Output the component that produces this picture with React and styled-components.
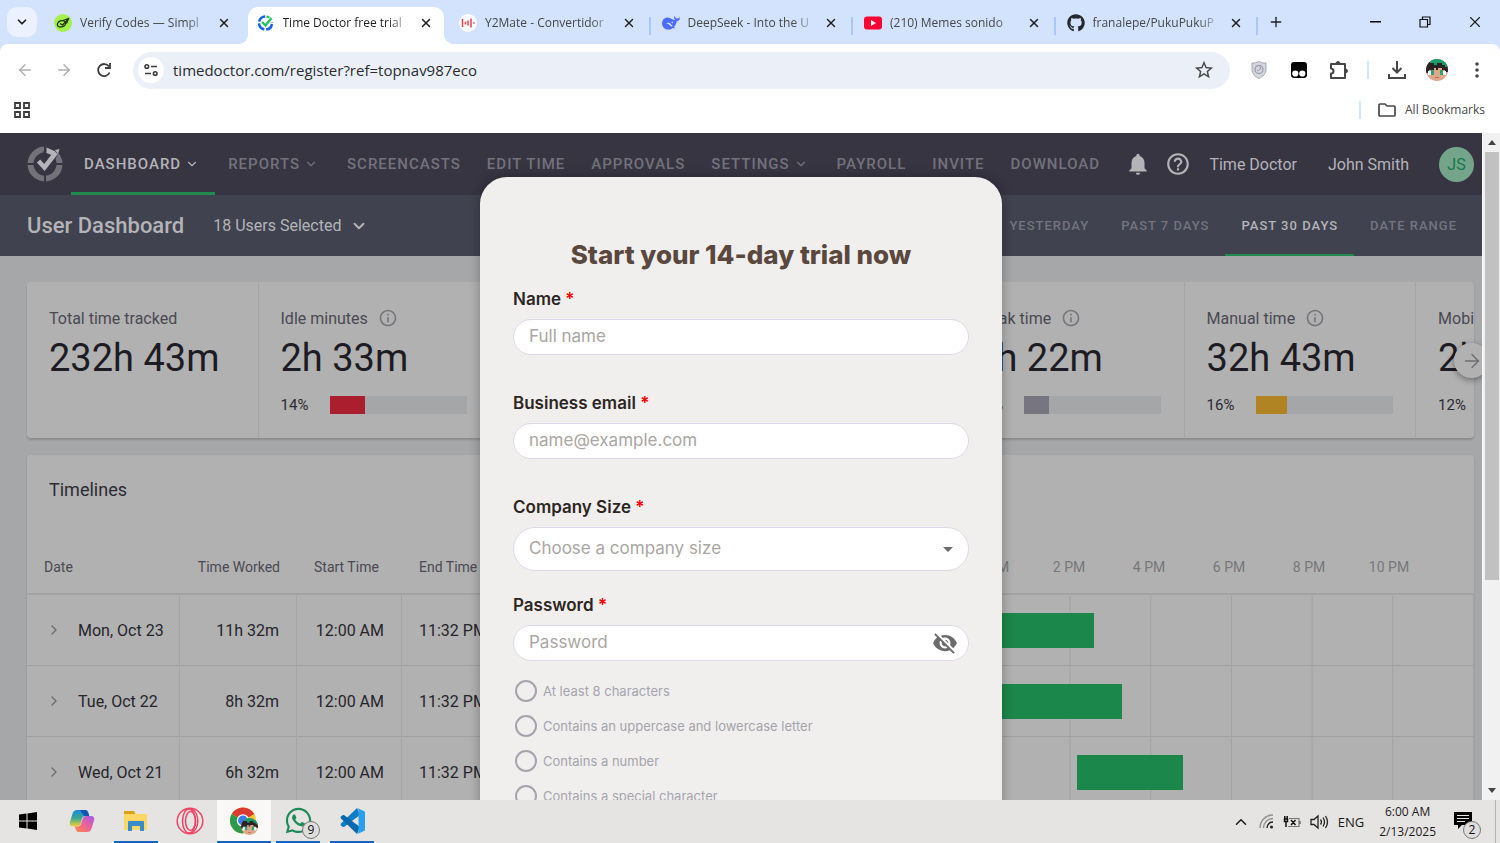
import React from 'react';
import styled, {createGlobalStyle, css} from 'styled-components';
import {FaGithub, FaWhatsapp} from 'react-icons/fa';
import {MdNotifications, MdHelpOutline, MdInfoOutline, MdVisibilityOff, MdArrowDropDown, MdStarOutline} from 'react-icons/md';
import {ArrowLeft, ArrowRight, ChevronDown, ChevronRight, ChevronUp, Plus, X} from 'lucide-react';

const GlobalStyle = createGlobalStyle`
    *,
    *::before,
    *::after {
        box-sizing: border-box;
    }

    body {
        margin: 0;
        font-family: 'Open Sans', 'Noto Sans', sans-serif;
    }

    button, input, select {
        font: inherit;
        color: inherit;
        margin: 0;
        padding: 0;
        border: 0;
        background: none;
        outline: none;
    }

    a {
        color: inherit;
        text-decoration: none;
    }

    svg {
        display: block;
        flex: none;
    }
`;

const Screen = styled.div`
    display: flex;
    flex-direction: column;
    height: 100vh;
    overflow: hidden;
    background: #fff;
`;

/* ---------- browser ---------- */

const TabStrip = styled.div`
    display: flex;
    align-items: center;
    flex: none;
    height: 44px;
    background: #d3e3fd;
`;

const TabSearch = styled.button`
    display: flex;
    align-items: center;
    justify-content: center;
    width: 30px;
    height: 30px;
    margin: 0 8px 0 7px;
    border-radius: 10px;
    background: #ebf1fe;
    color: #1f1f1f;
`;

const TabItem = styled.div`
    display: flex;
    align-items: center;
    flex: 0 1 13.5%;
    min-width: 0;
    height: 100%;
    padding-top: 7px;
`;

const TabBody = styled.div`
    position: relative;
    display: flex;
    align-items: center;
    flex: 1;
    min-width: 0;
    height: 100%;
    gap: 8px;
    padding: 0 12px 5px 9px;
    color: #474747;
    ${({$active}) => $active && css`
        background: #fff;
        border-radius: 10px 10px 0 0;
        color: #1f1f1f;

        &::before,
        &::after {
            content: '';
            position: absolute;
            bottom: 0;
            width: 10px;
            height: 10px;
        }

        &::before {
            right: 100%;
            background: radial-gradient(circle at 0 0, transparent 10px, #fff 10px);
        }

        &::after {
            left: 100%;
            background: radial-gradient(circle at 100% 0, transparent 10px, #fff 10px);
        }
    `}
`;

const TabTitle = styled.span`
    flex: 1;
    min-width: 0;
    overflow: hidden;
    white-space: nowrap;
    font-size: 12px;
    line-height: 20px;
    mask-image: linear-gradient(to right, #000 calc(100% - 24px), transparent);
`;

const IconButton = styled.button`
    display: flex;
    align-items: center;
    justify-content: center;
    flex: none;
    width: ${({$w}) => $w || 20}px;
    height: 20px;
    color: ${({$color}) => $color || '#1f1f1f'};
`;

const TabClose = styled(IconButton)`
    width: 12px;
`;

const TabLine = styled.span`
    width: 2px;
    height: 18px;
    margin: 0 2px;
    background: ${({$show}) => ($show ? '#a8c7fa' : 'transparent')};
`;

const WindowButtons = styled.div`
    display: flex;
    margin-left: auto;
`;

const ToolbarBack = styled.div`
    flex: none;
    background: #d3e3fd;
`;

const Toolbar = styled.div`
    display: flex;
    align-items: center;
    height: 52px;
    padding: 0 4px 0 5px;
    border-radius: 8px 8px 0 0;
    background: #fff;
`;

const AddressBar = styled.label`
    display: flex;
    align-items: center;
    flex: 1;
    min-width: 0;
    height: 37px;
    margin: 0 9px;
    padding: 0 15px 0 5px;
    border-radius: 19px;
    background: #ebf0f8;
`;

const SiteChip = styled.span`
    display: flex;
    align-items: center;
    justify-content: center;
    width: 26px;
    height: 26px;
    margin-right: 9px;
    border-radius: 50%;
    background: #fff;
`;

const AddressInput = styled.input`
    flex: 1;
    min-width: 0;
    color: #2a2c2f;
    font-size: 15px;
    line-height: 20px;
`;

const ToolLine = styled.span`
    width: 2px;
    height: 18px;
    margin: 0 ${({$gap}) => $gap}px;
    background: #d3e3fd;
`;

const BookmarkBar = styled.div`
    display: flex;
    align-items: center;
    justify-content: space-between;
    flex: none;
    height: 37px;
    padding: 0 15px 9px 14px;
    color: #474747;
    font-size: 12px;
    line-height: 20px;
`;

const BookmarkGroup = styled.button`
    display: flex;
    align-items: center;
    gap: 9px;
`;

/* ---------- page ---------- */

const Viewport = styled.main`
    display: flex;
    flex: 1;
    min-height: 0;
`;

const Page = styled.div`
    position: relative;
    flex: 1;
    min-width: 0;
    overflow: hidden;
    background: #a5a7a9;
    font-family: Roboto, sans-serif;
`;

const Scrollbar = styled.div`
    display: flex;
    flex-direction: column;
    align-items: center;
    flex: none;
    width: 18px;
    background: #f1f1f1;
    border-left: 1px solid #fafafa;
`;

const ScrollArrow = styled.span`
    display: flex;
    align-items: center;
    justify-content: center;
    height: 19px;
`;

const ScrollTrack = styled.div`
    flex: 1;
    width: 14px;
`;

const ScrollThumb = styled.div`
    height: 68%;
    background: #c1c1c1;
`;

const NavBar = styled.header`
    display: flex;
    align-items: center;
    height: 62px;
    padding: 0 8px 0 27px;
    background: #373542;
    color: #b4b3b8;
    font-size: 16px;
`;

const NavLinks = styled.nav`
    display: flex;
    height: 100%;
    margin-left: 8px;
`;

const NavLink = styled.a`
    display: flex;
    align-items: center;
    gap: 4px;
    padding: 3px 13px 0;
    border-bottom: 3px solid ${({$active}) => ($active ? '#218a4e' : 'transparent')};
    color: ${({$active}) => ($active ? '#b4b3b8' : '#73727c')};
    font-size: 15px;
    font-weight: 500;
    letter-spacing: 1px;
    white-space: nowrap;

    svg {
        margin-right: 3px;
    }
`;

const NavUser = styled.div`
    display: flex;
    align-items: center;
    margin-left: auto;
    white-space: nowrap;
`;

const NavText = styled.a`
    margin-left: ${({$gap}) => $gap}px;
`;

const Avatar = styled.span`
    display: flex;
    align-items: center;
    justify-content: center;
    width: 35px;
    height: 35px;
    margin-left: 30px;
    border-radius: 50%;
    background: #74a58a;
    color: #16774a;
`;

const SubBar = styled.div`
    display: flex;
    align-items: center;
    height: 61px;
    padding: 0 9px 0 27px;
    background: #40424f;
    color: #b4b4b8;
`;

const PageTitle = styled.h1`
    margin: 0 29px 0 0;
    font-size: 22px;
    font-weight: 500;
`;

const UserPicker = styled.button`
    display: flex;
    align-items: center;
    gap: 9px;
    font-size: 16px;
`;

const RangeTabs = styled.div`
    display: flex;
    height: 100%;
    margin-left: auto;
`;

const RangeTab = styled.button`
    padding: 2px 16px 0;
    border-bottom: 2px solid ${({$active}) => ($active ? '#218a4e' : 'transparent')};
    color: ${({$active}) => ($active ? '#b4b4b8' : '#737480')};
    font-size: 13px;
    font-weight: 500;
    letter-spacing: 1px;
    white-space: nowrap;
`;

const Content = styled.div`
    display: flex;
    flex-direction: column;
    gap: 17px;
    padding: 26px 8px 0 27px;
`;

const StatsWrap = styled.section`
    position: relative;
`;

const Stats = styled.div`
    display: flex;
    height: 156px;
    overflow: hidden;
    border-radius: 4px;
    background: #b1b1b1;
    box-shadow: 0 2px 2px #8c8c8d;
`;

const Stat = styled.div`
    flex: 0 0 16%;
    padding: 25px 22px 0;
    border-right: 1px solid #a5a5a6;
    white-space: nowrap;
`;

const StatLabel = styled.div`
    display: flex;
    align-items: center;
    gap: 10px;
    height: 22px;
    color: #4a4953;
    font-size: 16px;
`;

const StatValue = styled.div`
    color: #1d1c24;
    font-size: 38px;
    line-height: 58px;
`;

const StatShare = styled.div`
    display: flex;
    align-items: center;
    height: 36px;
    color: #2c2b33;
    font-size: 15px;
`;

const StatPercent = styled.span`
    width: 49px;
`;

const StatTrack = styled.div`
    flex: none;
    width: 137px;
    height: 18px;
    background: #a4a6a8;
`;

const StatFill = styled.div`
    height: 100%;
    background: ${({$color}) => $color};
`;

const NextButton = styled.button`
    position: absolute;
    top: 61px;
    right: -15px;
    display: flex;
    align-items: center;
    justify-content: center;
    width: 35px;
    height: 35px;
    border-radius: 50%;
    background: #b1b1b1;
    box-shadow: 0 2px 6px rgba(0, 0, 0, 0.4);
    color: #6d6d70;
`;

const Timelines = styled.section`
    border-radius: 4px;
    background: #b1b1b1;
    box-shadow: 0 1px 2px #8c8c8d;
`;

const SectionTitle = styled.h2`
    margin: 0;
    padding: 22px 22px 0;
    color: #2c2b33;
    font-size: 18px;
    font-weight: 400;
    line-height: 26px;
`;

const TimeTable = styled.table`
    width: 100%;
    margin-top: 37px;
    border-spacing: 0;
    table-layout: fixed;
    color: #26252c;
    font-size: 16px;
    white-space: nowrap;
`;

const Th = styled.th`
    width: ${({$w}) => ($w ? `${$w}px` : 'auto')};
    height: 55px;
    padding: 0 17px;
    border-bottom: 2px solid #a3a3a4;
    color: #4a4953;
    font-size: 14px;
    font-weight: 400;
    text-align: ${({$align}) => $align || 'left'};
`;

const ThChart = styled(Th)`
    padding: 0;
    color: #77777b;
`;

const Td = styled.td`
    height: 71px;
    padding: 0 17px;
    border-right: 1px solid #a5a5a6;
    border-bottom: 1px solid #a0a0a2;
    text-align: ${({$align}) => $align || 'left'};
`;

const TdChart = styled(Td)`
    padding: 0;
    border-right: 0;
`;

const DateCell = styled.div`
    display: flex;
    align-items: center;
    gap: 16px;
    padding-left: 2px;
`;

const Hours = styled.div`
    display: grid;
    grid-template-columns: repeat(11, 1fr);
    padding: 0 45px 0 43px;
    text-align: center;
`;

const DayTrack = styled.div`
    display: flex;
    align-items: center;
    height: 70px;
    background: linear-gradient(to right, transparent calc(100% - 1px), #a3a3a5 calc(100% - 1px)) 0 0 / calc(100% / 12) 100%;
`;

const DayBar = styled.div`
    height: 35px;
    background: #1c874a;
`;

/* ---------- sign-up form ---------- */

const SignUp = styled.form`
    position: absolute;
    top: 44px;
    left: 50%;
    width: 522px;
    height: 760px;
    padding: 62px 33px 0;
    transform: translateX(-50%);
    border-radius: 27px;
    background: #f0efee;
    box-shadow: 0 0 12px rgba(0, 0, 0, 0.3);
    font-family: Inter, sans-serif;
`;

const SignUpTitle = styled.h2`
    margin: 0 0 13px;
    color: #5a473d;
    font-size: 26px;
    font-weight: 800;
    line-height: 32px;
    text-align: center;
`;

const FieldLabel = styled.label`
    display: block;
    margin-bottom: 5px;
    color: #2d2522;
    font-size: 17px;
    font-weight: 600;
    line-height: 30px;
`;

const Required = styled.span`
    color: #f00;
`;

const FieldBox = styled.div`
    display: flex;
    align-items: center;
    height: ${({$tall}) => ($tall ? 44 : 36)}px;
    margin-bottom: ${({$gap}) => $gap || 0}px;
    padding: 0 ${({$tall}) => ($tall ? 8 : 10)}px 0 15px;
    border: 1px solid #dcdae8;
    border-radius: 22px;
    background: #fff;
    color: #aaa6a3;
    font-size: 17px;

    input,
    select {
        flex: 1;
        min-width: 0;
        height: 100%;
        padding-bottom: 3px;
    }

    input::placeholder {
        color: #aaa6a3;
        opacity: 1;
    }

    select {
        appearance: none;
    }
`;

const Rules = styled.ul`
    display: flex;
    flex-direction: column;
    gap: 13px;
    margin: 19px 0 0;
    padding: 0 2px;
    list-style: none;
`;

const Rule = styled.li`
    display: flex;
    align-items: center;
    gap: 6px;
    height: 22px;
    color: #a5a4ad;
    font-size: 13px;
    line-height: 18px;

    &::before {
        content: '';
        width: 22px;
        height: 22px;
        border: 2px solid #a5a4ad;
        border-radius: 50%;
    }
`;

/* ---------- taskbar ---------- */

const Taskbar = styled.footer`
    display: flex;
    flex: none;
    height: 43px;
    padding-left: 1px;
    background: #e6e4e2;
    color: #1a1a1a;
`;

const AppButton = styled.button`
    position: relative;
    display: flex;
    align-items: center;
    justify-content: center;
    width: 54px;
    border-bottom: 2px solid transparent;
    ${({$open}) => $open && css`
        width: 44px;
        margin: 0 5px;
        border-bottom-color: #1565c0;
    `}
    ${({$active}) => $active && css`
        width: 54px;
        margin: 0;
        background: #f9f8f7;
    `}
`;

const TrayButton = styled(AppButton)`
    align-self: stretch;
    width: 36px;
`;

const Count = styled.span`
    position: absolute;
    right: 0;
    bottom: 2px;
    width: 18px;
    height: 18px;
    border: 1px solid #777;
    border-radius: 50%;
    background: #dedede;
    color: #111;
    font-size: 12px;
    line-height: 16px;
    text-align: center;
`;

const Tray = styled.div`
    display: flex;
    align-items: center;
    gap: 9px;
    margin-left: auto;
    font-size: 13px;
`;

const Clock = styled.time`
    margin-left: 6px;
    font-size: 12px;
    line-height: 20px;
    text-align: center;
`;

const DesktopEdge = styled.span`
    align-self: stretch;
    width: 5px;
    margin-left: 5px;
    border-left: 1px solid #b5b3b1;
`;

/* ---------- drawings ---------- */

const VerifyIcon = () => (
    <svg width="18" height="18" viewBox="0 0 18 18">
        <circle cx="9" cy="9" r="9" fill="#a4f04c" />
        <g fill="none" stroke="#1d3310" strokeWidth="1.3">
            <ellipse cx="7.500" cy="9.800" rx="4.300" ry="3" transform="rotate(-20 7.500 9.800)" />
            <path d="M6 9.500l2.500 1.500L14 5.500M9 6.500l5.500-2-2 5" />
        </g>
    </svg>
);

const TimeDoctorIcon = () => (
    <svg width="18" height="18" viewBox="0 0 18 18" fill="none">
        <circle cx="8.500" cy="9" r="6.500" stroke="#1763e6" strokeWidth="2.600" strokeDasharray="8.200 2" strokeDashoffset="-1" />
        <path d="M10 1.500h7v7h-7z" fill="#fff" />
        <path d="M5 8l3.500 3.500L14.500 4" stroke="#25c45c" strokeWidth="2.400" />
        <path d="M9.500 2.500l3 1" stroke="#25c45c" strokeWidth="2" />
    </svg>
);

const Y2MateIcon = () => (
    <svg width="18" height="18" viewBox="0 0 18 18">
        <circle cx="9" cy="9" r="9" fill="#fff" />
        <path d="M3.500 5v8M6.500 7.500v3M9 6.500v5M12 4.500v9M15 8.200v1.600" stroke="#e0444e" strokeWidth="1.500" />
    </svg>
);

const DeepSeekIcon = () => (
    <svg width="18" height="18" viewBox="0 0 24 24">
        <path
            fill="#4d6bfe"
            d="M23.700 4.500c-.3-.1-.4.1-.5.2-.8 1-1.700 1.400-2.900 1.400-1.300-.1-2.400-.9-3-2.100-.5-1-.7-1.700-1-.7-.5 1.500-.1 3.100 1.300 4.400-1.400.4-2.600-.1-3.600-.6C11.500 5.800 9 4.400 6.300 4.700 2.200 5.300-.3 9 .1 13.200c.5 4.300 4 7.400 8.200 7.400 2.300.1 4.300-.7 5.900-2.100 1 .6 2.400.9 3.200.5-.3-.9-1-1.200-1.500-1.800 2.500-2.700 3.500-5.200 3.800-7.600 2.300-.3 4.200-2 4.200-4.700 0-.2 0-.3-.2-.4zM12.600 16.700c-2.700-2.100-4-4-7-4.400 2.500-1.300 5.200-.5 6.800 1.600.6.700 1 1.500 1.700 2-.4.5-.9.8-1.500.8zm1.700-4.500c-.8.300-1.600-.3-1.600-1.100 0-.6.400-1 .9-1 .9 0 1.500 1.300.7 2.100z"
        />
    </svg>
);

const YoutubeIcon = () => (
    <svg width="18" height="18" viewBox="0 0 18 18">
        <rect y="2.500" width="18" height="13" rx="3" fill="#ff0033" />
        <path d="M7 6v6l5-3z" fill="#fff" />
    </svg>
);

const ReloadIcon = () => (
    <svg width="16" height="16" viewBox="0 0 16 16" fill="none" stroke="#3c3c3c" strokeWidth="1.800">
        <path d="M13.600 10.500A6 6 0 1 1 13 4.500M14 1v5H9" />
    </svg>
);

const TuneIcon = () => (
    <svg width="14" height="14" viewBox="0 0 14 14" fill="none" stroke="#3c3c3c" strokeWidth="1.600">
        <circle cx="2.800" cy="3.500" r="1.800" />
        <circle cx="11.200" cy="10.500" r="1.800" />
        <path d="M7 3.500h6M1 10.500h6" />
    </svg>
);

const ShieldIcon = () => (
    <svg width="16" height="18" viewBox="0 0 16 18">
        <path d="M8 .5c2 1.200 4.500 1.700 7 1.500v6.500c0 4.200-3 7-7 9-4-2-7-4.800-7-9V2C3.500 2.200 6 1.700 8 .5z" fill="#d5d7dd" stroke="#a5a8b3" />
        <circle cx="8" cy="8.500" r="4" fill="none" stroke="#9b9fab" strokeWidth="1.300" />
        <path d="M6 9c2 1 3.500 0 3.500-3" fill="none" stroke="#8c909d" />
    </svg>
);

const MonkeyIcon = () => (
    <svg width="16" height="16" viewBox="0 0 16 16">
        <rect width="16" height="16" rx="3" />
        <circle cx="4.300" cy="11.500" r="3.100" fill="#fff" />
        <circle cx="11.300" cy="11.500" r="3.100" fill="#fff" />
    </svg>
);

const PuzzleIcon = () => (
    <svg width="20" height="20" viewBox="0 0 20 20" fill="none" stroke="#474747" strokeWidth="2">
        <path d="M2 4h14v14H2v-4.500a2.500 2.500 0 0 0 0-5z" strokeLinejoin="round" />
        <path d="M7 3.500a2 2 0 0 1 4 0zM16.500 9a2 2 0 0 1 0 4z" fill="#474747" strokeWidth="1" />
    </svg>
);

const DownloadIcon = () => (
    <svg width="18" height="18" viewBox="0 0 18 18" fill="none" stroke="#474747" strokeWidth="2">
        <path d="M9 0v11M4.500 7L9 11.500 13.500 7M1 13v4h16v-4" />
    </svg>
);

const FaceIcon = ({size = 22}) => (
    <svg width={size} height={size} viewBox="0 0 22 22">
        <clipPath id={`face${size}`}><circle cx="11" cy="11" r="11" /></clipPath>
        <g clipPath={`url(#face${size})`}>
            <path fill="#e0a888" d="M0 0h22v22H0z" />
            <path fill="#2b2226" d="M0 3h22v10h-3v-2h-3V9h-4v2h-2V9H8v3H5v-1H3v3H0z" />
            <path fill="#1b9d69" d="M4 0h18v8h-3V6h-3V4h-5v2H8V4H4z" />
            <path fill="#fff" d="M2 12h4v4H2zM16 12h4v4h-4z" />
            <path fill="#29a577" d="M5 11h3v5H5zM14 11h3v5h-3z" />
            <path fill="#b86e58" d="M9 18h4v1H9z" />
        </g>
    </svg>
);

const DotsIcon = () => (
    <svg width="4" height="16" viewBox="0 0 4 16" fill="#474747">
        <circle cx="2" cy="2" r="1.800" />
        <circle cx="2" cy="8" r="1.800" />
        <circle cx="2" cy="14" r="1.800" />
    </svg>
);

const AppsIcon = () => (
    <svg width="16" height="16" viewBox="0 0 16 16" fill="none" stroke="#3c3c3c" strokeWidth="1.800">
        <path d="M1 1h5v5H1zM10 1h5v5h-5zM1 10h5v5H1zM10 10h5v5h-5z" />
    </svg>
);

const FolderIcon = () => (
    <svg width="18" height="14" viewBox="0 0 18 14" fill="none" stroke="#474747" strokeWidth="1.700">
        <path d="M1 2.200Q1 1 2.200 1H7l2 2h7q1 0 1 1v8q0 1-1 1H2q-1 0-1-1z" />
    </svg>
);

const RestoreIcon = () => (
    <svg width="12" height="12" viewBox="0 0 12 12" fill="none" stroke="#111" strokeWidth="1.200">
        <path d="M1 3.500h7.500V11H1zM3.500 3.500V1H11v7.500H8.500" />
    </svg>
);

const LogoIcon = () => (
    <svg width="36" height="36" viewBox="0 0 36 36" fill="none">
        <circle cx="18" cy="18" r="14.500" stroke="#73727b" strokeWidth="6" />
        <path d="M18 0v36M0 18h36" stroke="#373542" strokeWidth="2" />
        <path d="M20 0l13 4-6 12-9 8-7-10z" fill="#373542" />
        <path d="M11.500 15l6 6.500L29 6.500" stroke="#b4b3b8" strokeWidth="4.600" />
        <path d="M19.500 1.500v5.500l5 2 4-3.500z" fill="#b4b3b8" />
        <path d="M28 4l4.500-1-1.500 5z" fill="#b4b3b8" />
    </svg>
);

const WindowsIcon = () => (
    <svg width="18" height="18" viewBox="0 0 18 18">
        <path d="M0 2.500l7.500-1v7H0zM8.500 1.400L18 0v8.500H8.500zM0 9.500h7.500v7l-7.500-1zM8.500 9.500H18V18l-9.500-1.400z" />
    </svg>
);

const CopilotIcon = () => (
    <svg width="26" height="24" viewBox="0 0 26 24">
        <defs>
            <linearGradient id="copA" x1="0" y1="0" x2="0" y2="1">
                <stop offset="0" stopColor="#188ad7" />
                <stop offset="0.500" stopColor="#3ba894" />
                <stop offset="1" stopColor="#f4d330" />
            </linearGradient>
            <linearGradient id="copB" x1="1" y1="0" x2="0" y2="1">
                <stop offset="0" stopColor="#a158ee" />
                <stop offset="0.500" stopColor="#ed6199" />
                <stop offset="1" stopColor="#fb8c46" />
            </linearGradient>
        </defs>
        <path d="M8 1h8.500q2 0 2.700 2.500l1 3.500h-4q-2.500 0-3.200 2.500l-1.500 5.500q-.8 2.500-3 2.500H4Q0 17.500 1 13L3.500 4.500Q4.500 1 8 1z" fill="url(#copA)" />
        <path d="M11 1h5.500q2 0 2.700 2.500l1 3.500h-5z" fill="#1455b8" />
        <path d="M18 23H9.500q-2 0-2.700-2.500l-1-3h3q2.500 0 3.200-2.500l1.700-5.500q.8-2.500 3-2.500H22q4 0 3 4.500L22.500 19.500Q21.500 23 18 23z" fill="url(#copB)" />
    </svg>
);

const ExplorerIcon = () => (
    <svg width="24" height="20" viewBox="0 0 24 20">
        <path d="M0 0h10l1.500 3H0z" fill="#dca018" />
        <path d="M0 3h23v16H0z" fill="#fcd766" />
        <path d="M4 11q0-1 1-1h14q1 0 1 1v9h-4v-5H8v5H4z" fill="#398ccb" />
    </svg>
);

const OperaIcon = () => (
    <svg width="28" height="28" viewBox="0 0 28 28" fill="none" stroke="#ee4468" strokeWidth="1.500">
        <circle cx="14" cy="14" r="12.800" />
        <ellipse cx="13" cy="14" rx="6.500" ry="12" />
        <ellipse cx="14.500" cy="14" rx="5" ry="9.500" />
        <path d="M15 2c9 3 9 21 0 24" />
    </svg>
);

const ChromeIcon = () => (
    <svg width="28" height="28" viewBox="0 0 28 28">
        <circle cx="13" cy="13.500" r="13" fill="#fcc934" />
        <path d="M13 13.500L1.700 7A13 13 0 0 1 24.300 7z" fill="#d93b30" />
        <path d="M13 13.500L1.700 7A13 13 0 0 0 13 26.500l4-6z" fill="#2c9a4b" />
        <circle cx="13" cy="13.500" r="6.200" fill="#fff" />
        <circle cx="13" cy="13.500" r="4.900" fill="#3b7ded" />
        <svg x="11" y="11" width="17" height="17"><FaceIcon size={17} /></svg>
    </svg>
);

const CodeIcon = () => (
    <svg width="26" height="26" viewBox="0 0 26 26">
        <path d="M18 0l-16 15.500q-1 1 0 2l1.500 1.300q.8.600 1.800 0L21 7z" fill="#0f7cc4" />
        <path d="M18 26L2 10.500q-1-1 0-2l1.500-1.300q.8-.6 1.800 0L21 19z" fill="#0b68ad" />
        <path d="M18 0l7 3q1 .500 1 1.500v17q0 1-1 1.500l-7 3q1.500-1 1.500-3V3q0-2-1.500-3z" fill="#28a0ee" />
    </svg>
);

const WifiIcon = () => (
    <svg width="15" height="15" viewBox="0 0 15 15" fill="none" strokeWidth="1.400">
        <path d="M1 14A13 13 0 0 1 14 1M4.500 14A9.500 9.500 0 0 1 14 4.500" stroke="#929090" />
        <path d="M8 14a6 6 0 0 1 6-6" stroke="#222" />
        <circle cx="12.500" cy="13" r="1.500" fill="#222" />
    </svg>
);

const BatteryIcon = () => (
    <svg width="18" height="12" viewBox="0 0 18 12" fill="none" stroke="#111" strokeWidth="1.500">
        <path d="M6 2.500h10v8H5M17.200 5v3" stroke="#777" strokeWidth="1.200" />
        <path d="M1.500 3h3v2.500h-3zM1.800 0v2.500M4.200 0v2.500M3 5v6M8 4l4.500 5M12.500 4L8 9" />
    </svg>
);

const SoundIcon = () => (
    <svg width="19" height="16" viewBox="0 0 19 16" fill="none" stroke="#222" strokeWidth="1.300">
        <path d="M1 5.500h3L8 2v12l-4-3.500H1zM10.500 5.500q1.800 2.500 0 5M13 3.500q3 4.500 0 9M15.500 2q4 6 0 12" />
    </svg>
);

const NoticeIcon = () => (
    <svg width="18" height="17" viewBox="0 0 18 17">
        <path d="M0 0h18v13H8l-4 4v-4H0z" />
        <path d="M3 3.500h12M3 6.500h12M3 9.500h8" stroke="#e6e4e2" />
    </svg>
);

const Triangle = ({down}) => (
    <svg width="8" height="5" viewBox="0 0 8 5" fill="#444">
        <path d={down ? 'M0 0h8L4 5z' : 'M0 5h8L4 0z'} />
    </svg>
);

const tabs = [
    {title: 'Verify Codes — Simpl', icon: <VerifyIcon />},
    {title: 'Time Doctor free trial', icon: <TimeDoctorIcon />, active: true},
    {title: 'Y2Mate - Convertidor', icon: <Y2MateIcon />, line: true},
    {title: 'DeepSeek - Into the U', icon: <DeepSeekIcon />, line: true},
    {title: '(210) Memes sonido', icon: <YoutubeIcon />, line: true},
    {title: 'franalepe/PukuPukuP', icon: <FaGithub size={18} color="#24292f" />, line: true},
];

const navLinks = [
    {text: 'DASHBOARD', menu: true, active: true},
    {text: 'REPORTS', menu: true},
    {text: 'SCREENCASTS'},
    {text: 'EDIT TIME'},
    {text: 'APPROVALS'},
    {text: 'SETTINGS', menu: true},
    {text: 'PAYROLL'},
    {text: 'INVITE'},
    {text: 'DOWNLOAD'},
];

const ranges = ['YESTERDAY', 'PAST 7 DAYS', 'PAST 30 DAYS', 'DATE RANGE'];

const stats = [
    {label: 'Total time tracked', value: '232h 43m'},
    {label: 'Idle minutes', value: '2h 33m', share: '14%', fill: 26, color: '#ab1e2d', info: true},
    {},
    {},
    {label: 'Break time', value: '1h 22m', share: '17%', fill: 18, color: '#767580', info: true},
    {label: 'Manual time', value: '32h 43m', share: '16%', fill: 23, color: '#b08323', info: true},
    {label: 'Mobile time', value: '2h 12m', share: '12%', fill: 20, color: '#767580', info: true},
];

const hours = ['2 AM', '4 AM', '6 AM', '8 AM', '10 AM', '12 PM', '2 PM', '4 PM', '6 PM', '8 PM', '10 PM'];

const days = [
    {date: 'Mon, Oct 23', worked: '11h 32m', from: 40, to: 60.7},
    {date: 'Tue, Oct 22', worked: '8h 32m', from: 40, to: 63.6},
    {date: 'Wed, Oct 21', worked: '6h 32m', from: 59, to: 69.9},
    {date: 'Thu, Oct 20', worked: '6h 32m', from: 40, to: 50},
];

const rules = [
    'At least 8 characters',
    'Contains an uppercase and lowercase letter',
    'Contains a number',
    'Contains a special character',
];

const Browser = () => (
    <>
        <TabStrip>
            <TabSearch aria-label="Search tabs"><ChevronDown size={14} strokeWidth={3} /></TabSearch>
            {tabs.map(({title, icon, active, line}) => (
                <TabItem key={title}>
                    <TabBody $active={active}>
                        {icon}
                        <TabTitle>{title}</TabTitle>
                        <TabClose aria-label="Close tab"><X size={14} strokeWidth={2.5} /></TabClose>
                    </TabBody>
                    <TabLine $show={line} />
                </TabItem>
            ))}
            <IconButton aria-label="New tab" $w={32}><Plus size={16} /></IconButton>
            <WindowButtons>
                <IconButton aria-label="Minimize" $w={50}>
                    <svg width="11" height="2" viewBox="0 0 11 2"><path d="M0 0h11v1.500H0z" /></svg>
                </IconButton>
                <IconButton aria-label="Restore" $w={50}><RestoreIcon /></IconButton>
                <IconButton aria-label="Close window" $w={50}><X size={18} strokeWidth={1.5} /></IconButton>
            </WindowButtons>
        </TabStrip>
        <ToolbarBack>
            <Toolbar>
                <IconButton aria-label="Back" $w={39} $color="#b0b0b0"><ArrowLeft size={18} /></IconButton>
                <IconButton aria-label="Forward" $w={40} $color="#b0b0b0"><ArrowRight size={18} /></IconButton>
                <IconButton aria-label="Reload" $w={40}><ReloadIcon /></IconButton>
                <AddressBar>
                    <SiteChip><TuneIcon /></SiteChip>
                    <AddressInput aria-label="Address" defaultValue="timedoctor.com/register?ref=topnav987eco" />
                    <MdStarOutline size={22} color="#474747" />
                </AddressBar>
                <IconButton aria-label="Shield" $w={40}><ShieldIcon /></IconButton>
                <IconButton aria-label="Scripts" $w={40}><MonkeyIcon /></IconButton>
                <IconButton aria-label="Extensions" $w={40}><PuzzleIcon /></IconButton>
                <ToolLine $gap={8} />
                <IconButton aria-label="Downloads" $w={40}><DownloadIcon /></IconButton>
                <IconButton aria-label="Profile" $w={40}><FaceIcon /></IconButton>
                <IconButton aria-label="Menu" $w={39}><DotsIcon /></IconButton>
            </Toolbar>
        </ToolbarBack>
        <BookmarkBar>
            <IconButton aria-label="Apps" $w={16}><AppsIcon /></IconButton>
            <BookmarkGroup>
                <ToolLine $gap={8} />
                <FolderIcon />
                All Bookmarks
            </BookmarkGroup>
        </BookmarkBar>
    </>
);

const Header = () => (
    <>
        <NavBar>
            <LogoIcon />
            <NavLinks>
                {navLinks.map(({text, menu, active}) => (
                    <NavLink key={text} href="#" $active={active}>
                        {text}
                        {menu && <ChevronDown size={14} />}
                    </NavLink>
                ))}
            </NavLinks>
            <NavUser>
                <MdNotifications size={26} />
                <NavText href="#" $gap={14} aria-label="Help"><MdHelpOutline size={26} /></NavText>
                <NavText href="#" $gap={18}>Time Doctor</NavText>
                <NavText href="#" $gap={31}>John Smith</NavText>
                <Avatar>JS</Avatar>
            </NavUser>
        </NavBar>
        <SubBar>
            <PageTitle>User Dashboard</PageTitle>
            <UserPicker>18 Users Selected<ChevronDown size={18} strokeWidth={2.5} /></UserPicker>
            <RangeTabs>
                {ranges.map((text) => (
                    <RangeTab key={text} $active={text === 'PAST 30 DAYS'}>{text}</RangeTab>
                ))}
            </RangeTabs>
        </SubBar>
    </>
);

const StatCards = () => (
    <StatsWrap>
        <Stats>
            {stats.map(({label, value, share, fill, color, info}, i) => (
                <Stat key={i}>
                    <StatLabel>{label}{info && <MdInfoOutline size={20} color="#77777b" />}</StatLabel>
                    <StatValue>{value}</StatValue>
                    {share && (
                        <StatShare>
                            <StatPercent>{share}</StatPercent>
                            <StatTrack><StatFill $color={color} style={{width: `${fill}%`}} /></StatTrack>
                        </StatShare>
                    )}
                </Stat>
            ))}
        </Stats>
        <NextButton aria-label="Next"><ArrowRight size={22} strokeWidth={1.5} /></NextButton>
    </StatsWrap>
);

const TimelineTable = () => (
    <Timelines>
        <SectionTitle>Timelines</SectionTitle>
        <TimeTable>
            <thead>
                <tr>
                    <Th $w={153}>Date</Th>
                    <Th $w={117} $align="right">Time Worked</Th>
                    <Th $w={105}>Start Time</Th>
                    <Th $w={104}>End Time</Th>
                    <ThChart>
                        <Hours>{hours.map((hour) => <span key={hour}>{hour}</span>)}</Hours>
                    </ThChart>
                </tr>
            </thead>
            <tbody>
                {days.map(({date, worked, from, to}) => (
                    <tr key={date}>
                        <Td><DateCell><ChevronRight size={16} color="#6d6d70" />{date}</DateCell></Td>
                        <Td $align="right">{worked}</Td>
                        <Td $align="right">12:00 AM</Td>
                        <Td>11:32 PM</Td>
                        <TdChart>
                            <DayTrack>
                                <DayBar style={{marginLeft: `${from}%`, width: `${to - from}%`}} />
                            </DayTrack>
                        </TdChart>
                    </tr>
                ))}
            </tbody>
        </TimeTable>
    </Timelines>
);

const SignUpForm = () => (
    <SignUp>
        <SignUpTitle>Start your 14-day trial now</SignUpTitle>
        <FieldLabel htmlFor="name">Name <Required>*</Required></FieldLabel>
        <FieldBox $gap={33}><input id="name" placeholder="Full name" /></FieldBox>
        <FieldLabel htmlFor="email">Business email <Required>*</Required></FieldLabel>
        <FieldBox $gap={33}><input id="email" type="email" placeholder="name@example.com" /></FieldBox>
        <FieldLabel htmlFor="size">Company Size <Required>*</Required></FieldLabel>
        <FieldBox $tall $gap={19}>
            <select id="size">
                <option>Choose a company size</option>
            </select>
            <MdArrowDropDown size={24} color="#6b6b6b" />
        </FieldBox>
        <FieldLabel htmlFor="password">Password <Required>*</Required></FieldLabel>
        <FieldBox>
            <input id="password" type="password" placeholder="Password" />
            <IconButton type="button" aria-label="Show password" $w={26} $color="#6b6b6b"><MdVisibilityOff size={26} /></IconButton>
        </FieldBox>
        <Rules>
            {rules.map((rule) => <Rule key={rule}>{rule}</Rule>)}
        </Rules>
    </SignUp>
);

const Desktop = () => (
    <Taskbar>
        <AppButton aria-label="Start"><WindowsIcon /></AppButton>
        <AppButton aria-label="Copilot"><CopilotIcon /></AppButton>
        <AppButton aria-label="Files" $open><ExplorerIcon /></AppButton>
        <AppButton aria-label="Opera"><OperaIcon /></AppButton>
        <AppButton aria-label="Chrome" $open $active><ChromeIcon /></AppButton>
        <AppButton aria-label="WhatsApp" $open><FaWhatsapp size={29} color="#1d8a57" /><Count>9</Count></AppButton>
        <AppButton aria-label="Code" $open><CodeIcon /></AppButton>
        <Tray>
            <ChevronUp size={18} />
            <WifiIcon />
            <BatteryIcon />
            <SoundIcon />
            <span>ENG</span>
            <Clock>6:00 AM<br />2/13/2025</Clock>
            <TrayButton aria-label="Notifications">
                <NoticeIcon />
                <Count>2</Count>
            </TrayButton>
            <DesktopEdge />
        </Tray>
    </Taskbar>
);

const App = () => (
    <Screen>
        <GlobalStyle />
        <Browser />
        <Viewport>
            <Page>
                <Header />
                <Content>
                    <StatCards />
                    <TimelineTable />
                </Content>
                <SignUpForm />
            </Page>
            <Scrollbar>
                <ScrollArrow><Triangle /></ScrollArrow>
                <ScrollTrack><ScrollThumb /></ScrollTrack>
                <ScrollArrow><Triangle down /></ScrollArrow>
            </Scrollbar>
        </Viewport>
        <Desktop />
    </Screen>
);

export default App;
